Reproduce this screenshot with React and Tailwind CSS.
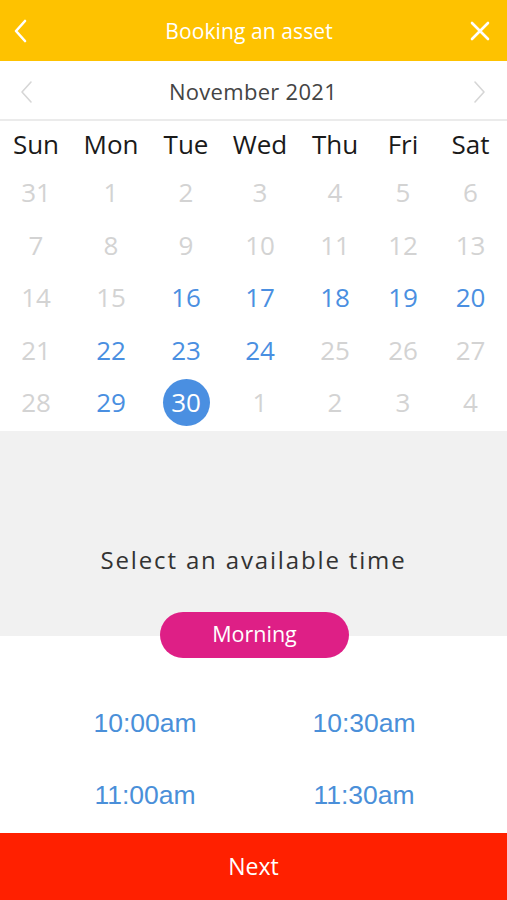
import React from "react";

const weekdays = ["Sun", "Mon", "Tue", "Wed", "Thu", "Fri", "Sat"];
const rows = [
  [[31, 0], [1, 0], [2, 0], [3, 0], [4, 0], [5, 0], [6, 0]],
  [[7, 0], [8, 0], [9, 0], [10, 0], [11, 0], [12, 0], [13, 0]],
  [[14, 0], [15, 0], [16, 1], [17, 1], [18, 1], [19, 1], [20, 1]],
  [[21, 0], [22, 1], [23, 1], [24, 1], [25, 0], [26, 0], [27, 0]],
  [[28, 0], [29, 1], [30, 2], [1, 0], [2, 0], [3, 0], [4, 0]],
];

const cols = "grid grid-cols-[72px_78px_72px_76px_74px_62px_73px]";

export default function App() {
  return (
    <div className="w-[507px] h-[900px] flex flex-col bg-white overflow-hidden" style={{ fontFamily: "'Open Sans', sans-serif" }}>
      {/* Header */}
      <div className="h-[61px] bg-[#fec200] flex items-center justify-between pl-[13px] pr-[14px] shrink-0">
        <svg width="16" height="24" viewBox="0 0 16 24" className="mt-[1px]">
          <path d="M12 2 L3 12 L12 22" fill="none" stroke="white" strokeWidth="2.6" strokeLinecap="round" strokeLinejoin="round" />
        </svg>
        <div className="text-white text-[21px] tracking-[0.1px] mt-[3px]">Booking an asset</div>
        <svg width="22" height="22" viewBox="0 0 22 22" className="mr-[2px]">
          <path d="M3 3 L19 19 M19 3 L3 19" fill="none" stroke="white" strokeWidth="2.6" strokeLinecap="round" />
        </svg>
      </div>

      {/* Month row */}
      <div className="h-[58px] flex items-center justify-between px-[19px] shrink-0">
        <svg width="14" height="24" viewBox="0 0 14 24" className="mt-[3px]">
          <path d="M12 2 L3 12 L12 22" fill="none" stroke="#d6d6d6" strokeWidth="1.6" strokeLinecap="round" strokeLinejoin="round" />
        </svg>
        <div className="text-[#444] text-[22px] tracking-[0.3px] mt-[2px]">November 2021</div>
        <svg width="14" height="24" viewBox="0 0 14 24" className="mr-[1px] mt-[3px]">
          <path d="M2 2 L11 12 L2 22" fill="none" stroke="#d6d6d6" strokeWidth="1.6" strokeLinecap="round" strokeLinejoin="round" />
        </svg>
      </div>
      <div className="h-[2px] bg-[#ebebeb] shrink-0" />

      {/* Weekdays */}
      <div className={`${cols} h-[45px] pt-[1px] items-center shrink-0`}>
        {weekdays.map((d) => (
          <div key={d} className="text-center text-[26px] leading-none text-[#1a1a1a]">{d}</div>
        ))}
      </div>

      {/* Dates */}
      <div className="flex flex-col shrink-0 pb-[2px]">
        {rows.map((r, i) => (
          <div key={i} className={`${cols} h-[52.5px] items-center`}>
            {r.map(([n, s], j) => (
              <div key={j} className="flex items-center justify-center">
                {s === 2 ? (
                  <div className="w-[47px] h-[47px] rounded-full bg-[#4a8fe1] text-white text-[26px] leading-none flex items-center justify-center">{n}</div>
                ) : (
                  <div className={`text-[26px] leading-none ${s === 1 ? "text-[#4a8fe1]" : "text-[#d3d3d3]"}`}>{n}</div>
                )}
              </div>
            ))}
          </div>
        ))}
      </div>

      {/* Gray section */}
      <div className="h-[205px] bg-[#f1f1f1] shrink-0 flex flex-col items-center justify-end relative">
        <div className="text-[24px] text-[#333] tracking-[1.85px] mb-[58px]">Select an available time</div>
        <div className="absolute left-[160px] top-[181px] w-[189px] h-[46px] rounded-full bg-[#de1f86] flex items-center justify-center text-white text-[21.5px]">
          Morning
        </div>
      </div>

      {/* Times */}
      <div className="h-[197px] shrink-0 grid grid-cols-[290px_148px] auto-rows-[72px] pt-[52px] content-start">
        {["10:00am", "10:30am", "11:00am", "11:30am"].map((t) => (
          <div
            key={t}
            className="flex items-center justify-center text-[26.5px] text-[#4a8fd9]"
            style={{ fontFamily: "'Liberation Sans', Arial, sans-serif" }}
          >
            {t}
          </div>
        ))}
      </div>

      {/* Next */}
      <div className="h-[68px] bg-[#ff2000] flex items-center justify-center text-white text-[23px] shrink-0">Next</div>
    </div>
  );
}
